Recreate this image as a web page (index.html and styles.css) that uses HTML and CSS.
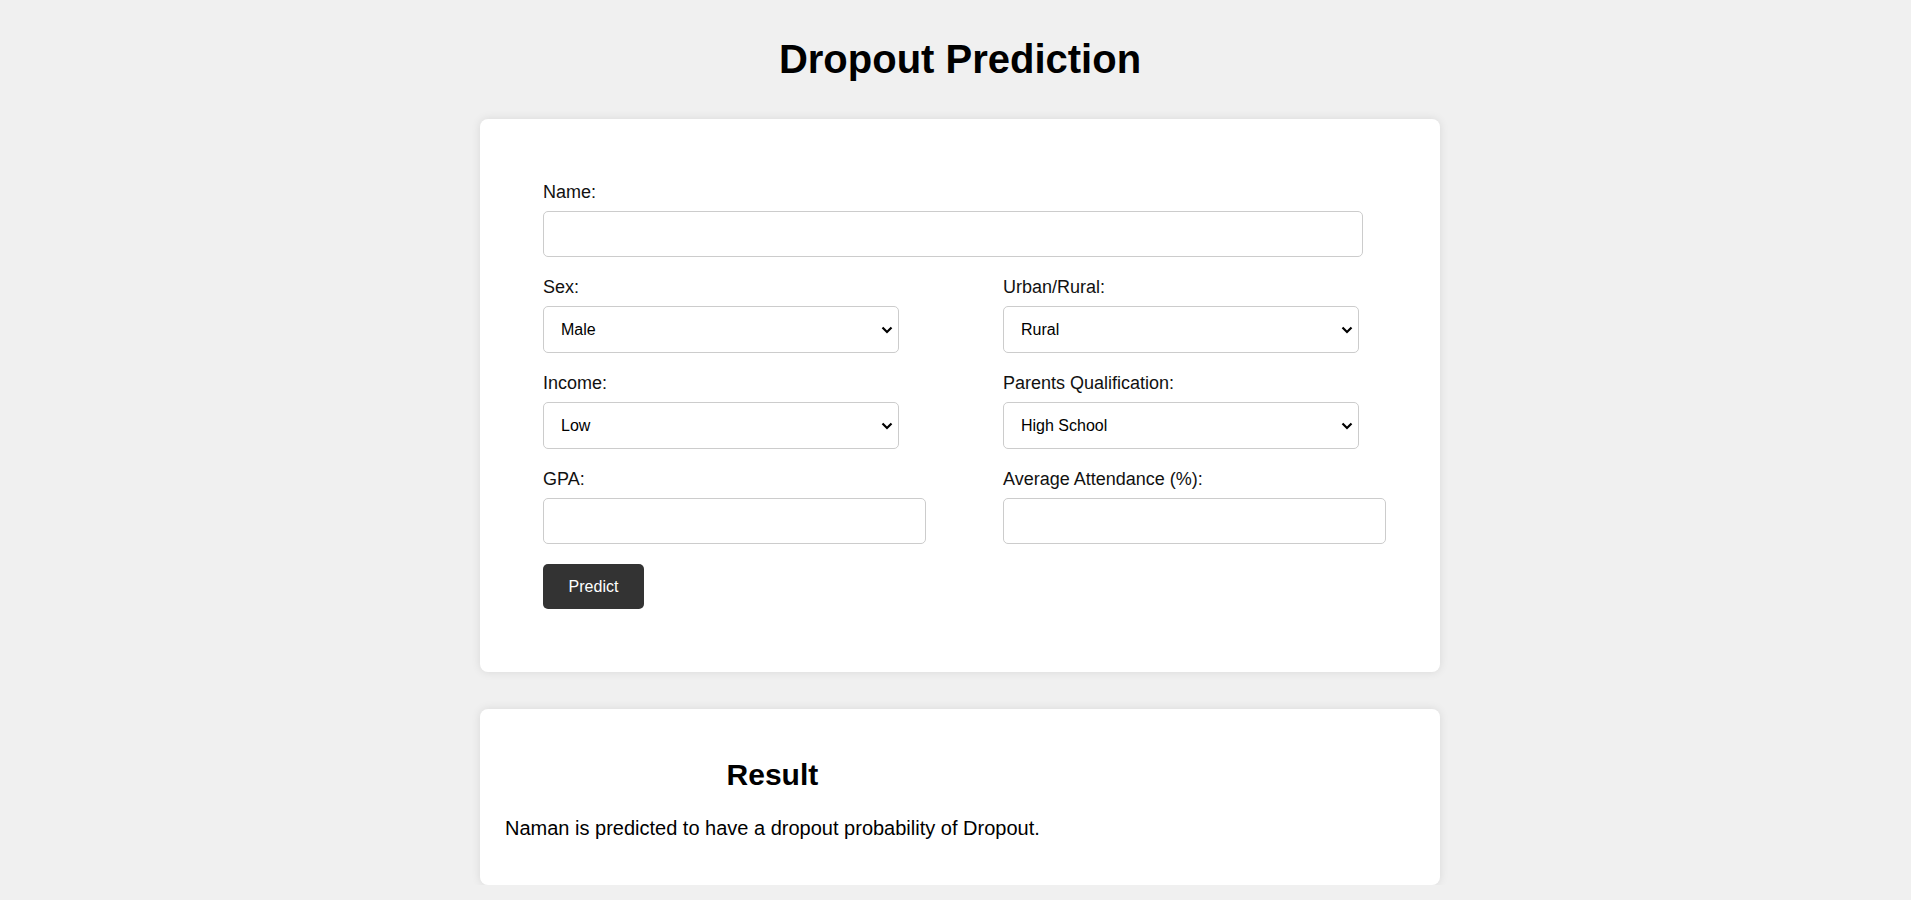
FILE: index.html
```html
<!DOCTYPE html>
<html lang="en">
<head>
<meta charset="utf-8">
<title>Dropout Prediction</title>
<link rel="stylesheet" href="styles.css">
</head>
<body>
<h1 class="title">Dropout Prediction</h1>
<div class="card form-card">
  <form class="form">
    <div class="field">
      <label class="label" for="name">Name:</label>
      <input class="input input-name" id="name" type="text">
    </div>
    <div class="grid">
      <div class="field">
        <label class="label" for="sex">Sex:</label>
        <select class="select" id="sex"><option>Male</option><option>Female</option></select>
      </div>
      <div class="field">
        <label class="label" for="area">Urban/Rural:</label>
        <select class="select" id="area"><option>Rural</option><option>Urban</option></select>
      </div>
      <div class="field">
        <label class="label" for="income">Income:</label>
        <select class="select" id="income"><option>Low</option><option>Medium</option><option>High</option></select>
      </div>
      <div class="field">
        <label class="label" for="pq">Parents Qualification:</label>
        <select class="select" id="pq"><option>High School</option><option>Graduate</option></select>
      </div>
      <div class="field">
        <label class="label" for="gpa">GPA:</label>
        <input class="input input-half" id="gpa" type="text">
      </div>
      <div class="field">
        <label class="label" for="att">Average Attendance (%):</label>
        <input class="input input-half" id="att" type="text">
      </div>
    </div>
    <button class="btn" type="button">Predict</button>
  </form>
</div>
<div class="card result-card">
  <div class="result">
    <h2 class="result-title">Result</h2>
    <p class="result-text">Naman is predicted to have a dropout probability of Dropout.</p>
  </div>
</div>
</body>
</html>
```
FILE: styles.css
```css
html, body {
  margin: 0;
  padding: 0;
}
body {
  background: #f0f0f0;
  font-family: "Liberation Sans", Arial, sans-serif;
  color: #000;
  padding-left: 9px;
}
.title {
  margin: 37px 0 37px;
  font-size: 40px;
  font-weight: bold;
  text-align: center;
  line-height: normal;
}
.card {
  width: 960px;
  box-sizing: border-box;
  margin: 0 auto;
  background: #fff;
  border-radius: 8px;
  box-shadow: 0 0 10px rgba(0, 0, 0, 0.1);
}
.form-card {
  padding: 63px 63px 63px;
  margin-bottom: 37px;
}
.form {
  margin: 0;
}
.field {
  margin-bottom: 20px;
}
.label {
  display: block;
  font-size: 18px;
  margin-bottom: 8px;
  color: #111;
}
.grid {
  display: grid;
  grid-template-columns: 460px 1fr;
}
.input {
  display: block;
  box-sizing: border-box;
  height: 46px;
  padding: 0 12px;
  border: 1px solid #ccc;
  border-radius: 5px;
  font-family: inherit;
  font-size: 16px;
  background: #fff;
}
.input-name {
  width: 820px;
}
.input-half {
  width: 383px;
}
.select {
  display: block;
  box-sizing: border-box;
  width: 356px;
  height: 47px;
  padding: 0 30px 0 17px;
  border: 1px solid #ccc;
  border-radius: 5px;
  font-family: inherit;
  font-size: 16px;
  color: #000;
  -webkit-appearance: none;
  appearance: none;
  background-color: #fff;
  background-image: url("data:image/svg+xml,%3Csvg xmlns='http://www.w3.org/2000/svg' width='12' height='8' viewBox='0 0 12 8'%3E%3Cpath d='M1.5 1.5 L6 6 L10.5 1.5' fill='none' stroke='%23000' stroke-width='2.2'/%3E%3C/svg%3E");
  background-repeat: no-repeat;
  background-position: right 5px center;
  background-size: 12px 8px;
}
.btn {
  display: block;
  width: 101px;
  height: 45px;
  padding: 0;
  border: none;
  border-radius: 5px;
  background: #333;
  color: #fff;
  font-family: inherit;
  font-size: 16px;
  cursor: pointer;
}
.result-card {
  padding: 24px 25px 25px;
}
.result {
  display: inline-block;
  font-size: 20px;
}
.result-title {
  font-size: 30px;
  font-weight: bold;
  text-align: center;
  margin: 25px 0;
}
.result-text {
  margin: 20px 0;
}
```
